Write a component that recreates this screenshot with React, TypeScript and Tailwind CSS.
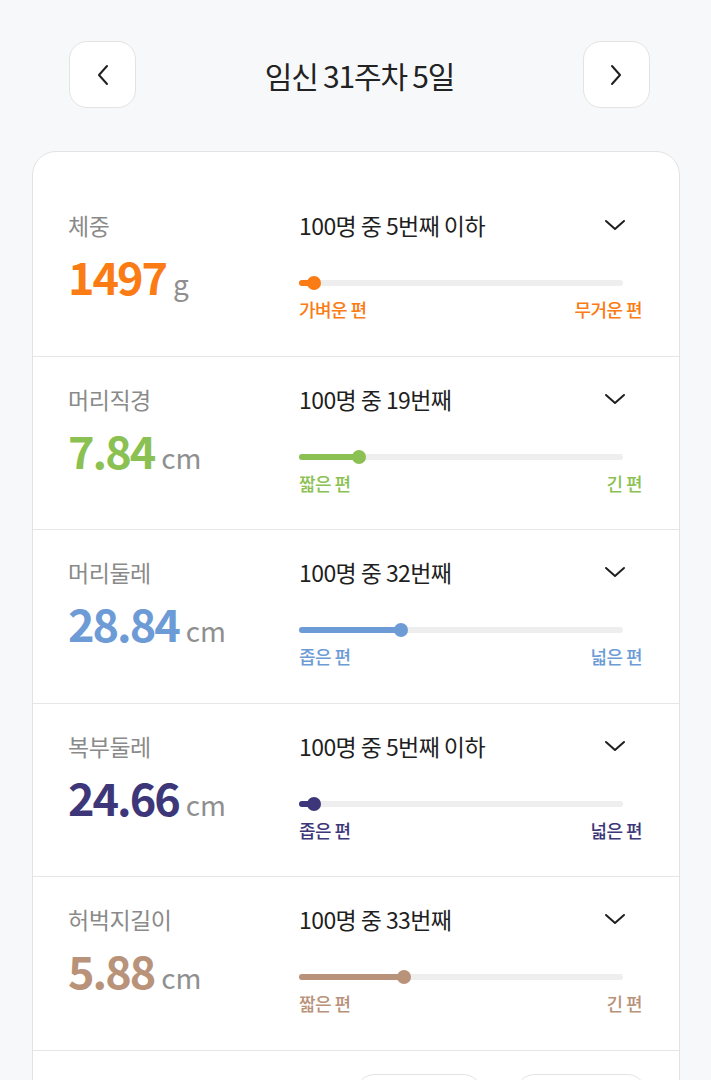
import React from 'react';

type Row = {
  label: string;
  value: string;
  unit: string;
  rank: string;
  pct: number;
  left: string;
  right: string;
  color: string;
};

const rows: Row[] = [
  { label: '체중', value: '1497', unit: 'g', rank: '100명 중 5번째 이하', pct: 4.6, left: '가벼운 편', right: '무거운 편', color: '#fb7b14' },
  { label: '머리직경', value: '7.84', unit: 'cm', rank: '100명 중 19번째', pct: 18.5, left: '짧은 편', right: '긴 편', color: '#8bc152' },
  { label: '머리둘레', value: '28.84', unit: 'cm', rank: '100명 중 32번째', pct: 31.5, left: '좁은 편', right: '넓은 편', color: '#6d9bd6' },
  { label: '복부둘레', value: '24.66', unit: 'cm', rank: '100명 중 5번째 이하', pct: 4.6, left: '좁은 편', right: '넓은 편', color: '#3d3779' },
  { label: '허벅지길이', value: '5.88', unit: 'cm', rank: '100명 중 33번째', pct: 32.4, left: '짧은 편', right: '긴 편', color: '#b9927a' },
];

function Chevron({ dir }: { dir: 'left' | 'right' | 'down' }) {
  if (dir === 'down') {
    return (
      <svg width="22" height="14" viewBox="0 0 22 14" fill="none" stroke="#1f1f1f" strokeWidth={2} strokeLinecap="round" strokeLinejoin="round">
        <path d="M2 3l9 8 9-8" />
      </svg>
    );
  }
  return (
    <svg width="14" height="24" viewBox="0 0 14 24" fill="none" stroke="#1f1f1f" strokeWidth={2} strokeLinecap="round" strokeLinejoin="round">
      {dir === 'left' ? <path d="M11 3L3 12l8 9" /> : <path d="M3 3l8 9-8 9" />}
    </svg>
  );
}

function StatRow({ row, first }: { row: Row; first: boolean }) {
  return (
    <div className={`flex border-b-[1.5px] border-[#e6e6e6] ${first ? 'pt-[59px]' : 'pt-[28px]'}`}>
      {/* left: label + value */}
      <div className="w-[266px] pl-[35px]">
        <div className="text-[23px] leading-[28px] text-[#8a8a8a] tracking-[-0.02em]">{row.label}</div>
        <div className="mt-[11px] flex items-baseline leading-[52px]">
          <span className="text-[45px] font-bold tracking-[-0.045em]" style={{ color: row.color }}>
            {row.value}
          </span>
          <span className="ml-[7px] text-[28px] text-[#8f8f8f]">{row.unit}</span>
        </div>
      </div>

      {/* right: rank + slider */}
      <div className="flex-1 pr-[37px] pb-[35.5px]">
        <div className="flex items-center justify-between">
          <span className="text-[23px] leading-[28px] text-[#1f1f1f] tracking-[-0.025em]">{row.rank}</span>
          <span className="mr-[16px] flex items-center">
            <Chevron dir="down" />
          </span>
        </div>
        <div className="mt-[41px] mr-[19px] relative h-[6px] rounded-full bg-[#eeeeee]">
          <div className="absolute left-0 top-0 h-[6px] rounded-full" style={{ width: `${row.pct}%`, background: row.color }} />
          <div
            className="absolute top-1/2 h-[14px] w-[14px] -translate-x-1/2 -translate-y-1/2 rounded-full"
            style={{ left: `${row.pct}%`, background: row.color }}
          />
        </div>
        <div className="mt-[12px] flex justify-between text-[18px] leading-[22px] font-medium tracking-[-0.03em]" style={{ color: row.color }}>
          <span>{row.left}</span>
          <span>{row.right}</span>
        </div>
      </div>
    </div>
  );
}

export default function App() {
  return (
    <div
      className="min-h-[1080px] w-full bg-[#f7f8fa]"
      style={{ fontFamily: '"Noto Sans CJK KR", "Noto Sans", sans-serif' }}
    >
      {/* Header */}
      <div className="flex items-center justify-between pl-[69px] pr-[61px] pt-[41px]">
        <button className="flex h-[67px] w-[67px] items-center justify-center rounded-[18px] border-[1.5px] border-[#e3e3e3] bg-white">
          <Chevron dir="left" />
        </button>
        <h1 className="text-[30px] leading-[34px] text-[#222] tracking-[-0.04em]">임신 31주차 5일</h1>
        <button className="flex h-[67px] w-[67px] items-center justify-center rounded-[18px] border-[1.5px] border-[#e3e3e3] bg-white">
          <Chevron dir="right" />
        </button>
      </div>

      {/* Card */}
      <div className="mx-[32px] mt-[43px] w-[648px] overflow-hidden rounded-[24px] border-[1.5px] border-[#e3e3e3] bg-white">
        {rows.map((r, i) => (
          <StatRow key={r.label} row={r} first={i === 0} />
        ))}
        <div className="flex justify-end gap-[32px] px-[32px] pt-[23px] pb-[24px]">
          <button className="h-[56px] w-[128px] rounded-[20px] border-[1.5px] border-[#e3e3e3] bg-white" />
          <button className="h-[56px] w-[132px] rounded-[20px] border-[1.5px] border-[#e3e3e3] bg-white" />
        </div>
      </div>
    </div>
  );
}
